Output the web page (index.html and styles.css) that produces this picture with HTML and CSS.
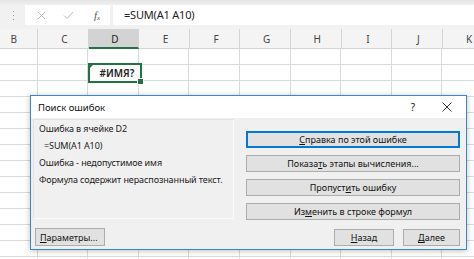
FILE: index.html
```html
<!DOCTYPE html>
<html lang="ru">
<head>
<meta charset="utf-8">
<link rel="stylesheet" href="styles.css">
</head>
<body>
<div class="app">
  <div class="fbar">
    <div class="grip">
      <svg width="3" height="9" viewBox="0 0 3 9"><rect x="1" y="0" width="1" height="1" fill="#9a9a9a"/><rect x="1" y="4" width="1" height="1" fill="#9a9a9a"/><rect x="1" y="8" width="1" height="1" fill="#9a9a9a"/></svg>
    </div>
    <div class="fbox">
      <svg class="ico-x" width="9" height="9" viewBox="0 0 9 9"><path d="M1 1L8 8M8 1L1 8" stroke="#b9b9b9" stroke-width="1" fill="none"/></svg>
      <svg class="ico-ok" width="11" height="9" viewBox="0 0 11 9"><path d="M1 4.5L4 7.5L10 1" stroke="#b9b9b9" stroke-width="1" fill="none"/></svg>
      <span class="fx">f<sub>x</sub></span>
    </div>
    <div class="finput">=SUM(A1 A10)</div>
  </div>
  <div class="hdr">
    <div class="ch">B</div>
    <div class="ch">C</div>
    <div class="ch sel">D</div>
    <div class="ch">E</div>
    <div class="ch">F</div>
    <div class="ch">G</div>
    <div class="ch">H</div>
    <div class="ch">I</div>
    <div class="ch">J</div>
    <div class="ch">K</div>
  </div>
  <div class="cells">
    <div class="active">#ИМЯ?</div>
  </div>

  <div class="dialog">
    <div class="title">
      <span class="ttext">Поиск ошибок</span>
      <span class="help">?</span>
      <svg class="close" width="10" height="10" viewBox="0 0 10 10"><path d="M0.5 0.5L9.5 9.5M9.5 0.5L0.5 9.5" stroke="#333" stroke-width="1" fill="none"/></svg>
    </div>
    <div class="dbody">
      <div class="main">
        <div class="panel">
          <div class="p-head">Ошибка в ячейке D2</div>
          <div class="p-formula">=SUM(A1 A10)</div>
          <div class="p-head">Ошибка - недопустимое имя</div>
          <div class="p-text">Формула содержит нераспознанный текст.</div>
        </div>
        <div class="btns">
          <div class="btn default"><u>С</u>правка по этой ошибке</div>
          <div class="btn">Показа<u>т</u>ь этапы вычисления...</div>
          <div class="btn">Пропуст<u>и</u>ть ошибку</div>
          <div class="btn">Из<u>м</u>енить в строке формул</div>
        </div>
      </div>
      <div class="foot">
        <div class="btn small"><u>П</u>араметры...</div>
        <div class="nav">
          <div class="btn nb"><u>Н</u>азад</div>
          <div class="btn nb"><u>Д</u>алее</div>
        </div>
      </div>
    </div>
  </div>
</div>
</body>
</html>
```

FILE: styles.css
```css
* { box-sizing: border-box; }
html, body { margin: 0; padding: 0; }
body {
  width: 474px;
  height: 259px;
  overflow: hidden;
  background: #fff;
  font-family: "Noto Sans", "DejaVu Sans", sans-serif;
  color: #222;
}
.app {
  position: relative;
  width: 474px;
  height: 259px;
  overflow: hidden;
}
.fbar {
  height: 29px;
  background: linear-gradient(#e4e4e4 0, #f1f1f1 5px, #f1f1f1 100%);
  display: flex;
  align-items: flex-start;
  padding-top: 5px;
}
.grip {
  width: 25px;
  height: 20px;
  display: flex;
  align-items: center;
  justify-content: center;
  padding-left: 1px;
}
.fbox {
  width: 85px;
  height: 20px;
  background: #fff;
  display: flex;
  align-items: center;
  padding-left: 12px;
}
.ico-x { margin-right: 17px; }
.ico-ok { margin-right: 20px; }
.fx {
  font-family: "Liberation Serif", serif;
  font-style: italic;
  font-size: 11px;
  color: #555;
}
.fx sub { font-size: 7px; vertical-align: -1px; }
.finput {
  margin-left: 3px;
  flex: 1;
  height: 20px;
  background: #fff;
  font-size: 11px;
  line-height: 20px;
  padding-left: 11px;
  letter-spacing: -0.2px;
  color: #222;
}
.hdr {
  display: grid;
  grid-template-columns: repeat(10, 50.6px);
  margin-left: -12.6px;
  height: 20px;
  background: #f4f4f4;
  border-bottom: 1px solid #d4d4d4;
}
.ch {
  border-right: 1px solid #d4d4d4;
  font-size: 10px;
  color: #444;
  display: flex;
  align-items: center;
  justify-content: center;
  padding-top: 1px;
  padding-left: 3px;
}
.ch.sel {
  background: #d3d3d3;
  border-bottom: 2px solid #217346;
  margin-bottom: -1px;
  color: #222;
}
.cells {
  display: grid;
  grid-template-columns: repeat(10, 50.6px);
  grid-auto-rows: 16px;
  margin-left: -12.6px;
  height: 210px;
  background-image:
    repeating-linear-gradient(to right, transparent 0, transparent 49.6px, #dadada 49.6px, #dadada 50.6px),
    repeating-linear-gradient(to bottom, transparent 0, transparent 15px, #dadada 15px, #dadada 16px);
}
.active {
  grid-column: 3;
  grid-row: 2;
  position: relative;
  margin: -2px -3px -2px -1px;
  border: 2px solid #217346;
  background: #fff;
  font-size: 10px;
  font-weight: 600;
  color: #222;
  display: flex;
  align-items: center;
  justify-content: center;
  padding-left: 4px;
}
.active::before {
  content: "";
  position: absolute;
  left: 0;
  top: 0;
  border-top: 3px solid #217346;
  border-right: 3px solid transparent;
}
.active::after {
  content: "";
  position: absolute;
  right: -4px;
  bottom: -4px;
  width: 5px;
  height: 5px;
  background: #217346;
  border: 1px solid #fff;
}

.dialog {
  position: absolute;
  left: 30px;
  top: 95px;
  width: 437px;
  height: 155px;
  border: 1px solid #3a85cf;
  background: #f0f0f0;
  box-shadow: 0 1px 6px rgba(0,0,0,0.25);
  display: flex;
  flex-direction: column;
}
.title {
  height: 22px;
  background: #fff;
  display: flex;
  align-items: center;
  padding-left: 7px;
  font-size: 9.5px;
  color: #111;
}
.ttext { flex: 1; }
.help { margin-right: 27px; font-size: 10px; }
.close { margin-right: 14px; }
.dbody {
  flex: 1;
  display: flex;
  flex-direction: column;
  padding: 1px 6px 3px 2px;
}
.main {
  display: flex;
  gap: 12px;
}
.panel {
  width: 201px;
  height: 100px;
  border: 1px solid #e2e2e2;
  border-right-color: #fafafa;
  border-bottom-color: #fafafa;
  padding: 3px 5px;
  font-size: 9px;
  line-height: 12px;
  letter-spacing: -0.1px;
  color: #1a1a1a;
}
.p-formula { padding-left: 5px; margin: 5px 0 5px; }
.p-text { margin-top: 5px; }
.btns {
  flex: 1;
  display: flex;
  flex-direction: column;
  gap: 7px;
  padding-top: 12px;
}
.btn {
  height: 17px;
  border: 1px solid #adadad;
  background: #e1e1e1;
  font-size: 9px;
  color: #111;
  display: flex;
  align-items: center;
  justify-content: center;
}
.btn.default {
  border: 2px solid #0078d7;
}
.btn u { text-decoration-thickness: 1px; text-underline-offset: 1px; }
.foot {
  margin-top: auto;
  display: flex;
  align-items: flex-end;
  justify-content: space-between;
  padding-left: 2px;
}
.btn.small {
  width: 70px;
  height: 18px;
  justify-content: flex-start;
  padding-left: 4px;
}
.nav { display: flex; gap: 9px; }
.btn.nb { width: 60px; height: 17px; }
.nav .btn:last-child { width: 57px; }
```
